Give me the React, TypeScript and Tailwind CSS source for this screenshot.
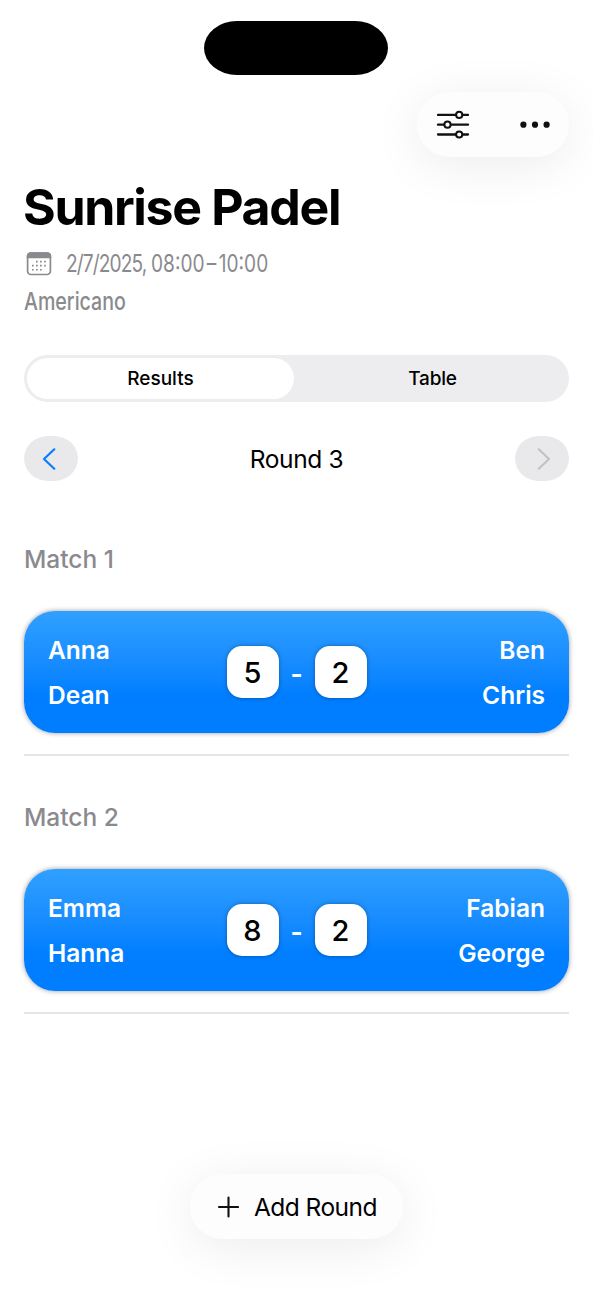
import { useState } from "react";
import clsx from "clsx";

type Match = {
  home: string[];
  away: string[];
  score: [number, number];
};

const matches: Match[] = [
  { home: ["Anna", "Dean"], away: ["Ben", "Chris"], score: [5, 2] },
  { home: ["Emma", "Hanna"], away: ["Fabian", "George"], score: [8, 2] },
];

const tabs = ["Results", "Table"];

// ICONS
const SlidersIcon = () => (
  <svg width="34" height="30" viewBox="0 0 34 30" fill="none" stroke="#111" strokeWidth="2.3" strokeLinecap="round">
    <path d="M2 4.900h18M27 4.900h5M2 14.700h6M15 14.700h17M2 24.500h18M27 24.500h5" />
    <circle cx="23.2" cy="4.9" r="3.1" strokeWidth="2" />
    <circle cx="11.5" cy="14.7" r="3.1" strokeWidth="2" />
    <circle cx="23.2" cy="24.5" r="3.1" strokeWidth="2" />
  </svg>
);

const DotsIcon = () => (
  <svg width="32" height="8" viewBox="0 0 32 8" fill="#111">
    <circle cx="4.4" cy="3.7" r="3.1" />
    <circle cx="16" cy="3.7" r="3.1" />
    <circle cx="27.6" cy="3.7" r="3.1" />
  </svg>
);

const CalendarIcon = () => (
  <svg width="26" height="24" viewBox="0 0 26 24" fill="#8a8a8e">
    <rect x="1.6" y="1.1" width="22.8" height="21.4" rx="3.4" fill="none" stroke="#8a8a8e" strokeWidth="1.7" />
    <path d="M.8 6.200V4.200Q.8 .3 4.700 .3H21.300Q25.200 .3 25.200 4.200V6.200Z" />
    <path d="M10 8.700h1.700v1.700H10zM14 8.700h1.700v1.700H14zM18.100 8.700h1.700v1.700h-1.700zM6 12.800h1.700v1.700H6zM10 12.800h1.700v1.700H10zM14 12.800h1.700v1.700H14zM18.100 12.800h1.700v1.700h-1.700zM6 16.900h1.700v1.700H6zM10 16.900h1.700v1.700H10zM14 16.900h1.700v1.700H14z" />
  </svg>
);

const Chevron = ({ flip = false }: { flip?: boolean }) => (
  <svg
    width="14"
    height="24"
    viewBox="0 0 14 24"
    fill="none"
    stroke="currentColor"
    strokeWidth="2.2"
    strokeLinecap="round"
    strokeLinejoin="round"
    className={clsx(flip && "-scale-x-100")}
  >
    <path d="M12.300 2.300 2 12l10.300 9.700" />
  </svg>
);

const ScoreBox = ({ value }: { value: number }) => (
  <div className="flex size-[52px] items-center justify-center rounded-[15px] bg-white text-[29px] font-medium text-black shadow-[0_0_4px_rgba(0,0,0,0.35)]">
    {value}
  </div>
);

const MatchCard = ({ match }: { match: Match }) => (
  <div className="grid h-[122px] grid-cols-[1fr_auto_1fr] items-center rounded-[31px] bg-linear-to-b from-[#30a0ff] to-[#007eff] to-70% px-6 text-[24.5px] leading-[45px] font-semibold text-white shadow-[0_0_5px_rgba(0,0,0,0.4)]">
    <div className="pt-px">
      {match.home.map((name) => (
        <p key={name}>{name}</p>
      ))}
    </div>
    <div className="flex items-center">
      <ScoreBox value={match.score[0]} />
      <span className="w-9 pt-[3px] text-center text-[26px] font-bold">-</span>
      <ScoreBox value={match.score[1]} />
    </div>
    <div className="pt-px text-right">
      {match.away.map((name) => (
        <p key={name}>{name}</p>
      ))}
    </div>
  </div>
);

export default function App() {
  const [tab, setTab] = useState("Results");

  return (
    <div className="flex h-[1290px] w-[593px] flex-col overflow-hidden bg-white px-6 font-['Inter',sans-serif] text-black">
      {/* ISLAND */}
      <div className="mt-[21px] mr-px h-[54px] w-[184px] shrink-0 self-center rounded-[33px/27px] bg-black" />

      {/* TOOLBAR */}
      <div className="mt-[17px] flex h-[65px] w-[152px] shrink-0 items-center justify-between self-end rounded-full bg-[#fdfdfd] pr-[18px] pl-[19px] shadow-[0_8px_50px_rgba(0,0,0,0.08)]">
        <button aria-label="Filter">
          <SlidersIcon />
        </button>
        <button aria-label="More">
          <DotsIcon />
        </button>
      </div>

      {/* HEADER */}
      <h1 className="mt-6 -ml-px text-[50px] leading-[52px] font-bold tracking-[-1.34px] whitespace-nowrap">Sunrise Padel</h1>
      <div className="mt-3 flex h-[37px] items-center text-[24.5px] text-[#8a8a8e]">
        <span className="ml-0.5">
          <CalendarIcon />
        </span>
        <span className="ml-[14px] origin-left scale-x-[0.78] whitespace-nowrap">
          <span className="tracking-[-1.1px]">2/7/2025, </span>
          08:00<span className="mx-[3px]">–</span>10:00
        </span>
      </div>
      <p className="h-[37px] w-fit origin-left scale-x-[0.8] text-[24.5px] leading-[38px] font-medium text-[#8a8a8e]">Americano</p>

      {/* TABS */}
      <div className="mt-9 flex h-[47px] shrink-0 rounded-full bg-[#ededef] p-[3px]">
        {tabs.map((t) => (
          <button
            key={t}
            onClick={() => setTab(t)}
            className={clsx(
              "rounded-full pt-px text-[19px] font-medium first:w-[267px] last:flex-1 last:pl-[5px] last:tracking-[-0.2px]",
              tab === t && "bg-white"
            )}
          >
            {t}
          </button>
        ))}
      </div>

      {/* ROUND NAV */}
      <div className="mt-[34px] flex h-[45px] shrink-0 items-center justify-between">
        <button className="flex h-[45px] w-[54px] items-center justify-center rounded-[24px/22.5px] bg-[#e9e9eb] pr-1 text-[#0a7cff]">
          <Chevron />
        </button>
        <span className="pt-0.5 text-[24.5px] tracking-[-0.35px]">Round 3</span>
        <button className="flex h-[45px] w-[54px] items-center justify-center rounded-[24px/22.5px] bg-[#e9e9eb] pl-1 text-[#c2c2c4]">
          <Chevron flip />
        </button>
      </div>

      {/* MATCHES */}
      <div className="mt-[34px]">
        {matches.map((match, i) => (
          <section key={i} className="h-[258px]">
            <h2 className="pt-[27px] pb-[34px] text-[24.5px] leading-[35px] font-medium text-[#8a8a8e]">Match {i + 1}</h2>
            <MatchCard match={match} />
            <div className="mt-[21px] h-[1.5px] bg-[#e6e6e7]" />
          </section>
        ))}
      </div>

      {/* ADD ROUND */}
      <button className="mt-[143px] mr-px flex h-[65px] w-[213px] shrink-0 items-center self-center rounded-full bg-[#fdfdfd] pl-[27px] text-[24.5px] tracking-[-0.55px] shadow-[0_8px_50px_rgba(0,0,0,0.08)]">
        <svg width="22" height="22" viewBox="0 0 22 22" fill="none" stroke="#111" strokeWidth="2.1" strokeLinecap="round">
          <path d="M11.500 1.500v19M2 11h19" />
        </svg>
        <span className="ml-[15.500px] pt-px">Add Round</span>
      </button>
    </div>
  );
}
